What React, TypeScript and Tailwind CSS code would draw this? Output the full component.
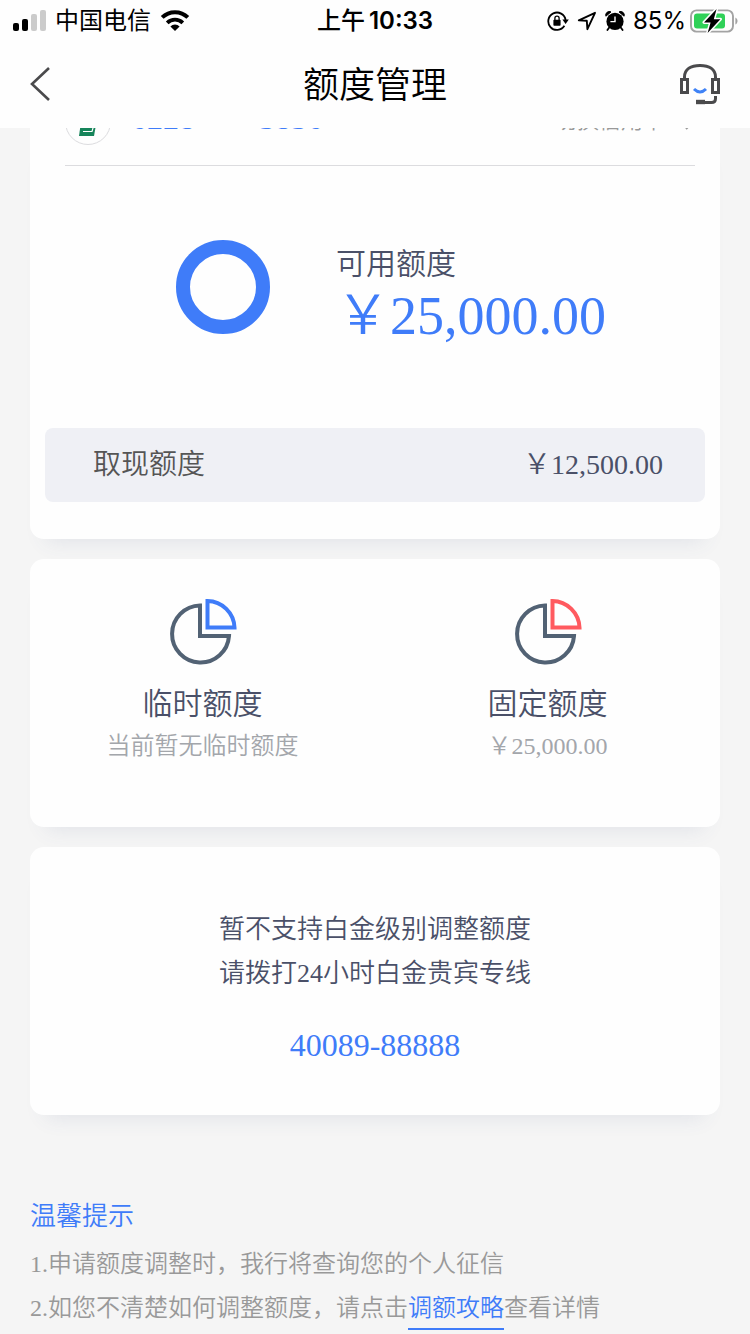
import type { ReactNode } from "react";
import clsx from "clsx";

// full-width yen sign, as wide as one Chinese character
const YEN = "\uFFE5";

const quotas = [
  { name: "临时额度", note: "当前暂无临时额度", accent: "text-[#3f7cf9]" },
  { name: "固定额度", note: `${YEN}25,000.00`, accent: "text-[#ff5a5f]" },
];

function Signal() {
  return (
    <svg viewBox="0 0 33 22" className="h-[22px] w-[33px]" aria-hidden="true">
      <rect x="0" y="13" width="6" height="8" rx="2" />
      <rect x="9" y="9" width="6" height="12" rx="2" />
      <rect x="18" y="4" width="6" height="17" rx="2" fill="#cbcbcb" />
      <rect x="27" y="0" width="6" height="21" rx="2" fill="#cbcbcb" />
    </svg>
  );
}

function Wifi() {
  return (
    <svg viewBox="0 0 30 22" className="h-[22px] w-[30px]" aria-hidden="true">
      <path d="M2.2 7.4a18.2 18.2 0 0 1 25.6 0" fill="none" stroke="#000" strokeWidth="4" />
      <path d="M7.2 12.8a11.2 11.2 0 0 1 15.6 0" fill="none" stroke="#000" strokeWidth="3.8" />
      <path d="M15 21l-4.6-4.6a6.6 6.6 0 0 1 9.2 0z" />
    </svg>
  );
}

function RotationLock() {
  return (
    <svg viewBox="0 0 22 20" className="h-5 w-[22px]" aria-hidden="true">
      <path d="M17.4 14.8A8.7 8.7 0 1 1 18.6 9" fill="none" stroke="#000" strokeWidth="1.8" />
      <path d="M15.4 8.4h6.4l-3.2 4.6z" />
      <rect x="6.4" y="8.8" width="7.2" height="6" rx="0.8" />
      <path d="M7.9 9V7.2a2.1 2.1 0 0 1 4.2 0V9" fill="none" stroke="#000" strokeWidth="1.3" />
    </svg>
  );
}

function LocationArrow() {
  return (
    <svg viewBox="0 0 20 20" className="size-5" aria-hidden="true">
      <path
        d="M1.8 9.4 18 1.8l-7.6 16.4-.6-8.4z"
        fill="none"
        stroke="#000"
        strokeWidth="1.9"
        strokeLinejoin="round"
      />
    </svg>
  );
}

function Alarm() {
  return (
    <svg viewBox="0 0 20 20" className="size-5" aria-hidden="true">
      <circle cx="10" cy="10.4" r="8.6" />
      <path d="M.9 5.2A3.6 3.6 0 0 1 6 .9zM19.1 5.2A3.6 3.6 0 0 0 14 .9z" stroke="#000" />
      <path d="m4.6 16-2.2 3M15.4 16l2.2 3" stroke="#000" strokeWidth="1.8" strokeLinecap="round" />
      <path d="M10 5.4v5.2H5.4" fill="none" stroke="#fff" strokeWidth="1.4" />
    </svg>
  );
}

function Battery() {
  return (
    <svg viewBox="0 0 48 24" className="h-6 w-12" aria-hidden="true">
      <rect x="1" y="1.4" width="42" height="21.2" rx="5.6" fill="none" stroke="#a3a3a3" strokeWidth="1.9" />
      <path d="M45.4 8.4c2.8 1.4 2.8 5.8 0 7.2z" fill="#a3a3a3" />
      <rect x="4" y="4.4" width="31" height="15.2" rx="3" fill="#30d158" />
      <path
        d="M26.6 0 14 13.4h6.6L17.6 24 30.4 10.2h-6.6z"
        stroke="#fff"
        strokeWidth="3"
        strokeLinejoin="round"
        paintOrder="stroke"
      />
    </svg>
  );
}

function Headset() {
  return (
    <svg viewBox="0 0 42 42" className="size-[42px]" fill="none" stroke="#4a4a4c" strokeWidth="3">
      <path d="M5.5 15.5V13C5.5 5 12 1.5 21 1.5S36.5 5 36.5 13v2.5" />
      <rect x="2.5" y="15.5" width="6" height="13" />
      <rect x="33.5" y="15.5" width="6" height="13" />
      <path d="M36.5 32v2.5q0 4-4 4H17" />
      <path d="M17 38h9" strokeWidth="4.4" />
      <path d="M15 25q6 6 12 0" stroke="#3f82f6" />
    </svg>
  );
}

function PieIcon({ className }: { className: string }) {
  return (
    <svg viewBox="0 0 68 68" className={clsx("size-[68px]", className)} fill="none" strokeWidth="4">
      <path d="M31 7.500A28.5 28.500 0 1 0 60 38H31z" stroke="#526274" />
      <path d="M38.5 3V29.500H65.500A27.500 27.500 0 0 0 38.500 3z" stroke="currentColor" />
    </svg>
  );
}

function Card({ className, children }: { className?: string; children: ReactNode }) {
  return (
    <section
      className={clsx("bg-[#fefefe] shadow-[0_18px_20px_-16px_rgba(70,90,140,0.12)]", className)}
    >
      {children}
    </section>
  );
}

export default function App() {
  return (
    <div className="min-h-screen bg-[#f5f5f5] font-['Liberation_Serif','Noto_Sans_CJK_SC',serif] font-[350] text-[#4a5068]">
      <header className="bg-[#fefefe] font-['Inter','Noto_Sans_CJK_SC',sans-serif] font-normal text-black">
        {/* Status bar */}
        <div className="grid h-[42px] grid-cols-[1fr_auto_1fr] items-center text-2xl">
          <div className="flex items-center gap-[9px] pl-[13px]">
            <Signal />
            <span>中国电信</span>
            <Wifi />
          </div>
          <p className="flex gap-1 font-medium">
            上午<span className="font-semibold">10:33</span>
          </p>
          <div className="flex items-center justify-end gap-2 pr-3">
            <RotationLock />
            <LocationArrow />
            <Alarm />
            <div className="flex items-center gap-1">
              <span>85%</span>
              <Battery />
            </div>
          </div>
        </div>

        {/* Title bar */}
        <div className="flex h-[86px] items-center justify-between px-[29px]">
          <button type="button" aria-label="返回" className="w-[42px]">
            <svg viewBox="0 0 22 36" className="h-9 w-[22px]" fill="none" stroke="#4a4a4c" strokeWidth="2.6">
              <path d="M20 1 3 17l17 16" />
            </svg>
          </button>
          <h1 className="text-4xl font-[350]">额度管理</h1>
          <button type="button" aria-label="客服">
            <Headset />
          </button>
        </div>
      </header>

      <main>
        <Card className="mx-[30px] rounded-b-[14px] px-[15px] pb-[37px]">
          {/* Card row, scrolled half way under the title bar */}
          <div className="mr-[10px] ml-5 flex h-[38px] items-end overflow-hidden border-b border-[#dcdcdf] pb-5">
            <span className="flex size-[46px] shrink-0 items-center justify-center rounded-full border border-[#dcdcdf]">
              <svg viewBox="0 0 22 28" className="h-7 w-[22px]" aria-hidden="true">
                <path d="M6 0h16l-5 28H2z" fill="#16845a" />
                <path d="M6 23.5h9l2-7" fill="none" stroke="#fff" strokeWidth="1.2" />
              </svg>
            </span>
            <span className="mb-1 ml-5 text-[32px] leading-[46px] text-[#3f7cf9]">6228****5856</span>
            <button
              type="button"
              className="mb-2 ml-auto flex items-center gap-5 text-[22px] leading-[32px] text-[#999999]"
            >
              切换信用卡
              <svg viewBox="0 0 10 18" className="h-[18px] w-[10px]" fill="none" stroke="#999" strokeWidth="2">
                <path d="m1 1 8 8-8 8" />
              </svg>
            </button>
          </div>

          <div className="mt-[74px] flex h-[188px] items-start gap-[66px] pl-[131px]">
            <svg viewBox="0 0 94 94" className="size-[94px] shrink-0" aria-hidden="true">
              <circle cx="47" cy="47" r="40" fill="none" stroke="#3f7cf9" strokeWidth="14" />
            </svg>
            <div className="pt-0.5">
              <p className="text-[30px] leading-[44px]">可用额度</p>
              <p className="text-[54px] leading-[60px] text-[#3f7cf9]">{YEN}25,000.00</p>
            </div>
          </div>

          <div className="flex h-[74px] items-center justify-between rounded-lg bg-[#eff0f5] pr-[42px] pl-12 text-[28px]">
            <span className="text-[#555555]">取现额度</span>
            <span>{YEN}12,500.00</span>
          </div>
        </Card>

        <Card className="mx-[30px] mt-5 grid h-[268px] grid-cols-2 rounded-[14px] pt-[39px]">
          {quotas.map((quota) => (
            <button key={quota.name} type="button" className="flex flex-col items-center">
              <PieIcon className={quota.accent} />
              <span className="mt-4 text-[30px] leading-[44px]">{quota.name}</span>
              <span className="mt-0.5 text-2xl leading-[36px] text-[#a3a6ab]">{quota.note}</span>
            </button>
          ))}
        </Card>

        <Card className="mx-[30px] mt-5 h-[268px] rounded-[14px] pt-[61px] text-center text-[26px] leading-[44px]">
          <p>暂不支持白金级别调整额度</p>
          <p>请拨打24小时白金贵宾专线</p>
          <a href="tel:4008988888" className="mt-[27px] inline-block text-[32px] text-[#3f7cf9]">
            40089-88888
          </a>
        </Card>

        <section className="mt-20 px-[30px] text-2xl leading-[44px] text-[#999999]">
          <h2 className="mb-[3px] text-[26px] leading-[44px] text-[#3f7cf9]">温馨提示</h2>
          <p>1.申请额度调整时，我行将查询您的个人征信</p>
          <p>
            2.如您不清楚如何调整额度，请点击
            <a href="#guide" className="inline-block border-b-2 border-[#3f7cf9] leading-[40px] text-[#3f7cf9]">
              调额攻略
            </a>
            查看详情
          </p>
        </section>
      </main>
    </div>
  );
}
